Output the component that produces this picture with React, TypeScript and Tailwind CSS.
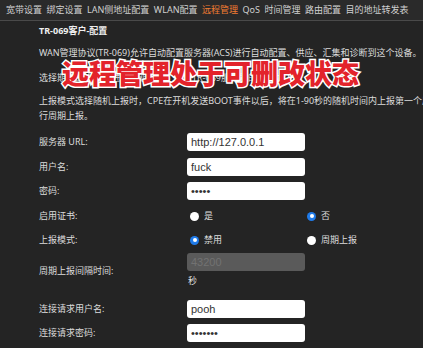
import React from "react";

const navItems = [
  "宽带设置",
  "绑定设置",
  "LAN侧地址配置",
  "WLAN配置",
  "远程管理",
  "QoS",
  "时间管理",
  "路由配置",
  "目的地址转发表",
];

function Radio({ checked, label }: { checked: boolean; label: string }) {
  return (
    <div className="flex w-[117px] items-center gap-[5px]">
      {checked ? (
        <span className="flex h-[9px] w-[9px] items-center justify-center rounded-full bg-[#1f7ae8]">
          <span className="h-[4px] w-[4px] rounded-full bg-white" />
        </span>
      ) : (
        <span className="h-[9px] w-[9px] rounded-full bg-white" />
      )}
      <span>{label}</span>
    </div>
  );
}

export default function App() {
  const rowLabel = "w-[148px] shrink-0";
  const input =
    "flex h-[18px] w-[118px] items-center rounded-[3px] bg-white pl-[4px] text-[11px] text-[#333] font-['Liberation_Sans','Noto_Sans_CJK_SC',sans-serif]";
  return (
    <div className="relative h-[348px] w-[423px] overflow-hidden bg-[#242424] text-[9px] text-[#dcdcdc] font-['Noto_Sans','Noto_Sans_CJK_SC',sans-serif]">
      <div className="flex h-[21px] items-center gap-[4.5px] whitespace-nowrap border-b border-[#4a4a4a] bg-[#2a2a2a] pl-[6px] text-[#d0d0d0]">
        {navItems.map((n) => (
          <span key={n} className={n === "远程管理" ? "text-[#f07c32]" : ""}>
            {n}
          </span>
        ))}
      </div>
      <div className="pl-[39px]">
        <div className="mt-[3px] h-[14px] font-bold leading-[14px] text-[#eeeeee]">
          TR-069客户-配置
        </div>
        <div className="mt-[8px] whitespace-nowrap leading-[14px]">
          WAN管理协议(TR-069)允许自动配置服务器(ACS)进行自动配置、供应、汇集和诊断到这个设备。
        </div>
        <div className="mt-[11px] whitespace-nowrap leading-[14px]">
          选择期望的连接点进行周期上报，关于TR-069服务器的设置如下。
        </div>
        <div className="mt-[8px] whitespace-nowrap leading-[15px]">
          上报模式选择随机上报时，CPE在开机发送BOOT事件以后，将在1-90秒的随机时间内上报第一个周期，之后进
          <br />
          行周期上报。
        </div>

        <div className="mt-[10px] flex h-[18px] items-center">
          <span className={rowLabel}>服务器 URL:</span>
          <div className={input}>http://127.0.0.1</div>
        </div>
        <div className="mt-[7px] flex h-[18px] items-center">
          <span className={rowLabel}>用户名:</span>
          <div className={input}>fuck</div>
        </div>
        <div className="mt-[6px] flex h-[18px] items-center">
          <span className={rowLabel}>密码:</span>
          <div className={input}>•••••</div>
        </div>
        <div className="mt-[7px] flex h-[18px] items-center">
          <span className={rowLabel}>启用证书:</span>
          <div className="flex pl-[3px]">
            <Radio checked={false} label="是" />
            <Radio checked={true} label="否" />
          </div>
        </div>
        <div className="mt-[6px] flex h-[18px] items-center">
          <span className={rowLabel}>上报模式:</span>
          <div className="flex pl-[3px]">
            <Radio checked={true} label="禁用" />
            <Radio checked={false} label="周期上报" />
          </div>
        </div>
        <div className="mt-[4px] flex items-center">
          <span className={rowLabel}>周期上报间隔时间:</span>
          <div className="flex flex-col">
            <div className="flex h-[18px] w-[118px] items-center rounded-[3px] bg-[#5a5a5a] pl-[4px] text-[11px] text-[#727272] font-['Liberation_Sans',sans-serif]">
              43200
            </div>
            <div className="mt-[3px] h-[14px] pl-[1px] leading-[14px]">秒</div>
          </div>
        </div>
        <div className="mt-[12px] flex h-[18px] items-center">
          <span className={rowLabel}>连接请求用户名:</span>
          <div className={input}>pooh</div>
        </div>
        <div className="mt-[6px] flex h-[18px] items-center">
          <span className={rowLabel}>连接请求密码:</span>
          <div className={input}>•••••••</div>
        </div>
      </div>

      <div className="absolute left-[62px] top-[57px] whitespace-nowrap text-[27px] font-black leading-[32px] text-[#e3232b] [-webkit-text-stroke:3px_white] [paint-order:stroke_fill] font-['Noto_Sans_CJK_SC',sans-serif]">
        远程管理处于可删改状态
      </div>
    </div>
  );
}
